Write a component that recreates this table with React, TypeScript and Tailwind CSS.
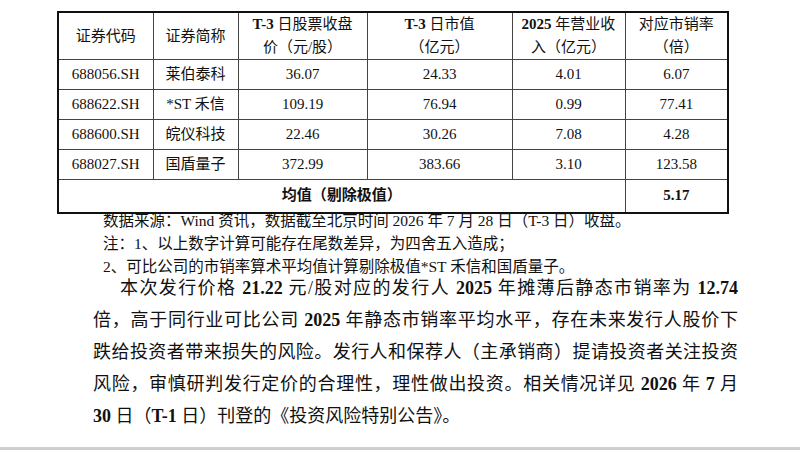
import React from "react";

const F = { fontFamily: '"Liberation Serif", "Noto Sans CJK SC", serif' };

const rows = [
  ["688056.SH", "莱伯泰科", "36.07", "24.33", "4.01", "6.07"],
  ["688622.SH", "*ST 禾信", "109.19", "76.94", "0.99", "77.41"],
  ["688600.SH", "皖仪科技", "22.46", "30.26", "7.08", "4.28"],
  ["688027.SH", "国盾量子", "372.99", "383.66", "3.10", "123.58"],
];

const cell = "border border-[#444] text-center align-middle p-0";

function Line({ children, last }: { children: React.ReactNode; last?: boolean }) {
  return (
    <div
      className={
        "h-[32px] leading-[32px] whitespace-nowrap " +
        (last ? "text-left" : "text-justify [text-align-last:justify]")
      }
    >
      {children}
    </div>
  );
}

export default function App() {
  return (
    <div className="w-[800px] h-[450px] bg-white text-[#111] overflow-hidden relative border-b-[3px] border-[#cfcfcf]" style={F}>
      <div className="pt-[11px] pl-[57px]">
        <table className="border-collapse border-2 border-[#111] text-[15px] leading-[23px] table-fixed w-[670px]">
          <colgroup>
            <col className="w-[95px]" />
            <col className="w-[85px]" />
            <col className="w-[129px]" />
            <col className="w-[145px]" />
            <col className="w-[113px]" />
            <col className="w-[103px]" />
          </colgroup>
          <tbody>
            <tr className="h-[47px]">
              <td className={cell}>证券代码</td>
              <td className={cell}>证券简称</td>
              <td className={cell}>
                <b>T-3</b> 日股票收盘<br />价（元/股）
              </td>
              <td className={cell}>
                <b>T-3</b> 日市值<br />（亿元）
              </td>
              <td className={cell}>
                <b>2025</b> 年营业收<br />入（亿元）
              </td>
              <td className={cell}>
                对应市销率<br />（倍）
              </td>
            </tr>
            {rows.map((r, i) => (
              <tr key={i} className="h-[30px]">
                {r.map((c, j) => (
                  <td key={j} className={cell}>{c}</td>
                ))}
              </tr>
            ))}
            <tr className="h-[33px]">
              <td colSpan={5} className={cell + " font-semibold"}>均值（剔除极值）</td>
              <td className={cell + " font-bold"}>5.17</td>
            </tr>
          </tbody>
        </table>
      </div>
      <div className="pl-[103px] -mt-[5px] text-[15.5px]">
        <div className="h-[23px] leading-[23px] whitespace-nowrap">数据来源：Wind 资讯，数据截至北京时间 2026 年 7 月 28 日（T-3 日）收盘。</div>
        <div className="h-[23px] leading-[23px] whitespace-nowrap">注：1、以上数字计算可能存在尾数差异，为四舍五入造成；</div>
        <div className="h-[23px] leading-[23px] whitespace-nowrap">2、可比公司的市销率算术平均值计算剔除极值*ST 禾信和国盾量子。</div>
      </div>
      <div className="ml-[93px] w-[645px] -mt-[6px] text-[18px]">
        <div className="pl-[27px]">
          <Line>
            本次发行价格 <b>21.22</b> 元/股对应的发行人 <b>2025</b> 年摊薄后静态市销率为 <b>12.74</b>
          </Line>
        </div>
        <Line>
          倍，高于同行业可比公司 <b>2025</b> 年静态市销率平均水平，存在未来发行人股价下
        </Line>
        <Line>跌给投资者带来损失的风险。发行人和保荐人（主承销商）提请投资者关注投资</Line>
        <Line>
          风险，审慎研判发行定价的合理性，理性做出投资。相关情况详见 <b>2026</b> 年 <b>7</b> 月
        </Line>
        <Line last>
          <b>30</b> 日（<b>T-1</b> 日）刊登的《投资风险特别公告》。
        </Line>
      </div>
    </div>
  );
}
